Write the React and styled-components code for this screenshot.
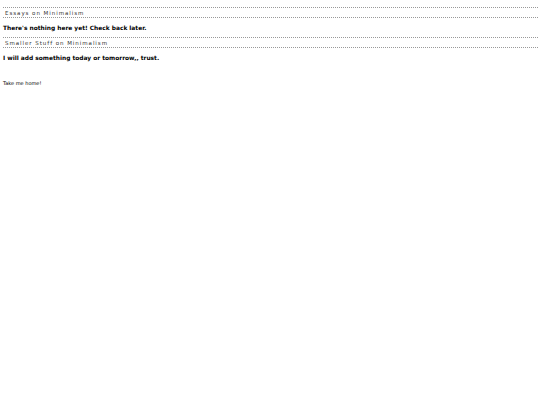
import React from 'react';
import styled, { createGlobalStyle } from 'styled-components';

const Global = createGlobalStyle`
  html, body { margin: 0; padding: 0; background: #fff; }
  body { font-family: "DejaVu Sans", Verdana, sans-serif; color: #000; }
`;

const Page = styled.div`
  padding: 7px 2px 0 3px;
`;

const SectionTitle = styled.h2`
  margin: 0;
  border-top: 1px dotted #999;
  border-bottom: 1px dotted #999;
  height: 9px;
  line-height: 10px;
  padding-left: 2px;
  font-size: 5.5px;
  font-weight: normal;
  letter-spacing: 0.95px;
  color: #333;
`;

const Note = styled.p`
  margin: 6px 0 5px 0;
  font-size: 5.9px;
  line-height: 8px;
  font-weight: bold;
`;

const HomeLink = styled.a`
  display: block;
  margin-top: 18px;
  font-size: 5px;
  color: #000;
  text-decoration: none;
`;

export default function App() {
  return (
    <Page>
      <Global />
      <SectionTitle>Essays on Minimalism</SectionTitle>
      <Note>There's nothing here yet! Check back later.</Note>
      <SectionTitle>Smaller Stuff on Minimalism</SectionTitle>
      <Note>I will add something today or tomorrow,, trust.</Note>
      <HomeLink href="#">Take me home!</HomeLink>
    </Page>
  );
}
